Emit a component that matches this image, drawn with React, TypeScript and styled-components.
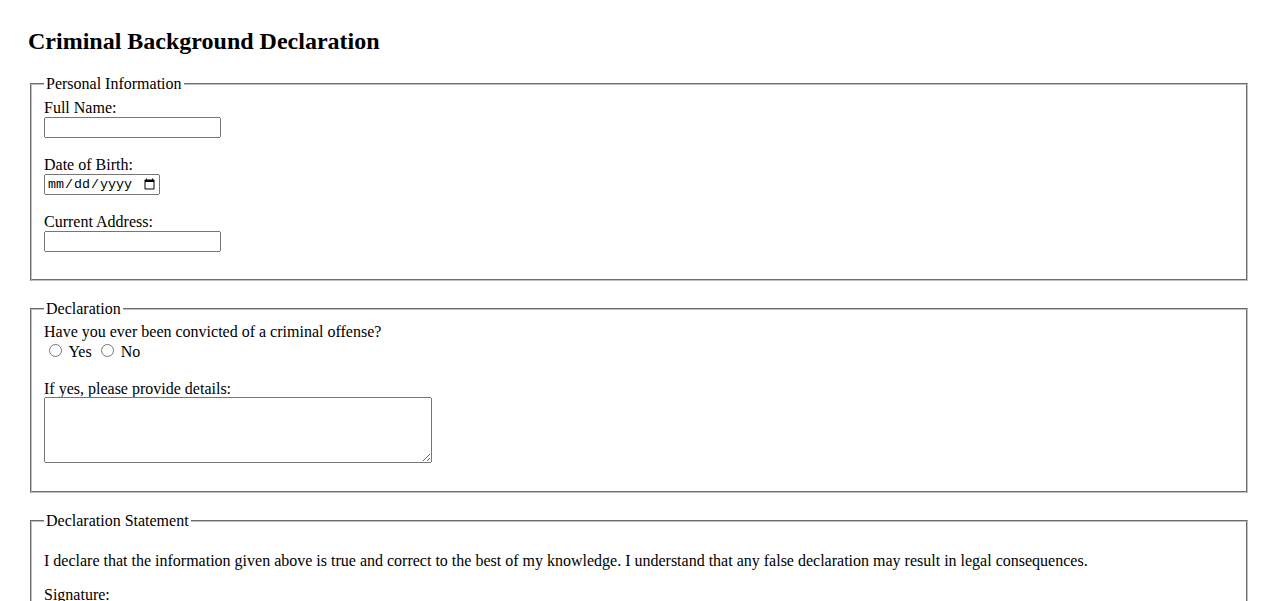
import React from "react";
import styled, { createGlobalStyle } from "styled-components";

const GlobalStyle = createGlobalStyle`
  html, body {
    background: #ffffff;
  }
  body {
    margin: 8px;
    color: #000000;
    font-family: "Liberation Serif", "Times New Roman", serif;
    font-size: 16px;
  }
`;

const Page = styled.div`
  padding: 20px;
`;

const Title = styled.h2`
  margin: 0 0 0.83em;
  font-size: 1.5em;
  font-weight: bold;
`;

const Form = styled.form`
  display: block;
`;

const Section = styled.fieldset`
  margin: 0 2px 19px;
  padding: 0.35em 0.75em 8px;
  border: 2px groove rgb(192, 192, 192);
  min-width: min-content;
`;

const Legend = styled.legend`
  padding: 0 2px;
`;

const Field = styled.div`
  margin-bottom: 1.15em;
`;

const Label = styled.label`
  display: block;
`;

const Question = styled.div`
  display: block;
`;

const ChoiceLabel = styled.label`
  display: inline;
`;

const TextInput = styled.input`
  box-sizing: border-box;
  width: 177px;
  height: 21px;
  font-family: "Liberation Sans", Arial, sans-serif;
  font-size: 13.333px;
  vertical-align: baseline;
`;

const DateInput = styled.input`
  box-sizing: border-box;
  width: 116px;
  height: 21px;
  font-family: "Liberation Mono", monospace;
  font-size: 13.333px;
`;

const Radio = styled.input`
  margin: 3px 3px 0 5px;
`;

const Details = styled.textarea`
  box-sizing: border-box;
  width: 388px;
  height: 66px;
  margin: -1px 0 2px;
  vertical-align: top;
  font-family: "Liberation Mono", monospace;
  font-size: 13.333px;
`;

const Statement = styled.p`
  margin: 1em 0;
`;

const SubmitButton = styled.button`
  font-family: "Liberation Sans", Arial, sans-serif;
  font-size: 13.333px;
`;

export default function App() {
  return (
    <>
      <GlobalStyle />
      <Page>
        <Title>Criminal Background Declaration</Title>
        <Form onSubmit={(e) => e.preventDefault()}>
          <Section>
            <Legend>Personal Information</Legend>
            <Field>
              <Label htmlFor="fullName">Full Name:</Label>
              <TextInput type="text" id="fullName" name="fullName" />
            </Field>
            <Field>
              <Label htmlFor="dob">Date of Birth:</Label>
              <DateInput type="date" id="dob" name="dob" />
            </Field>
            <Field>
              <Label htmlFor="address">Current Address:</Label>
              <TextInput type="text" id="address" name="address" />
            </Field>
          </Section>

          <Section>
            <Legend>Declaration</Legend>
            <Field>
              <Question>Have you ever been convicted of a criminal offense?</Question>
              <Radio type="radio" id="convYes" name="convicted" value="yes" />{" "}
              <ChoiceLabel htmlFor="convYes">Yes</ChoiceLabel>{" "}
              <Radio type="radio" id="convNo" name="convicted" value="no" />{" "}
              <ChoiceLabel htmlFor="convNo">No</ChoiceLabel>
            </Field>
            <Field>
              <Label htmlFor="details">If yes, please provide details:</Label>
              <Details id="details" name="details" />
            </Field>
          </Section>

          <Section>
            <Legend>Declaration Statement</Legend>
            <Statement>
              I declare that the information given above is true and correct to the best of my
              knowledge. I understand that any false declaration may result in legal consequences.
            </Statement>
            <Field>
              <Label htmlFor="signature">Signature:</Label>
              <TextInput type="text" id="signature" name="signature" />
            </Field>
            <Field>
              <Label htmlFor="signDate">Date:</Label>
              <DateInput type="date" id="signDate" name="signDate" />
            </Field>
          </Section>

          <SubmitButton type="submit">Submit Declaration</SubmitButton>
        </Form>
      </Page>
    </>
  );
}
